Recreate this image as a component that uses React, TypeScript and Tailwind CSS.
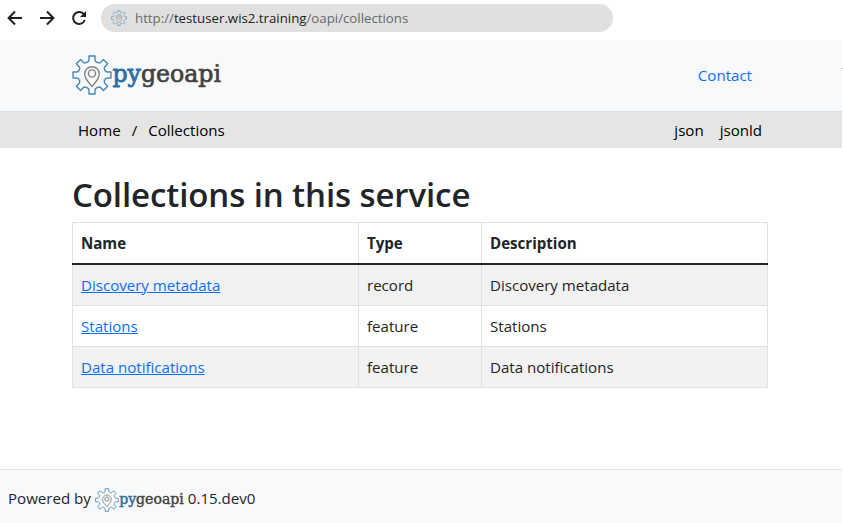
import { ReactNode } from 'react';

const FONT = "font-['Open_Sans','Noto_Sans',sans-serif]";

function GearPin({ className, size }: { className?: string; size?: number }) {
  return (
    <svg viewBox="0 0 40 40" width={size} height={size} className={className} fill="none" strokeLinejoin="round">
      <path
        stroke="#4a86b4"
        strokeWidth="1.4"
        d="M17 1h6v4q0 1.500 1.500 2l1.500.7q1.600.7 2.800-.5l2.600-2.600 4.200 4.200-2.600 2.600q-1.200 1.200-.6 2.700l.7 1.500q.6 1.400 2.100 1.400H39v6h-3.800q-1.500 0-2.100 1.400l-.7 1.500q-.6 1.500.6 2.700l2.600 2.600-4.200 4.200-2.600-2.600q-1.200-1.200-2.800-.5l-1.500.7q-1.500.5-1.500 2v4h-6v-4q0-1.500-1.500-2l-1.500-.7q-1.600-.7-2.800.5l-2.600 2.600-4.200-4.200 2.600-2.600q1.200-1.200.6-2.700l-.7-1.500Q6.300 23 4.800 23H1v-6h3.800q1.500 0 2.100-1.400l.7-1.500q.6-1.500-.6-2.700L4.400 8.800l4.200-4.200 2.600 2.600q1.200 1.200 2.800.5l1.500-.7q1.500-.5 1.500-2z"
      />
      <path stroke="#828282" strokeWidth="1.4" d="M20 31.500c-3-4-7.300-7.500-7.300-12.500a7.300 7.300 0 0 1 14.600 0c0 5-4.300 8.500-7.300 12.500z" />
      <circle cx="20" cy="18.500" r="3.600" stroke="#828282" strokeWidth="1.4" />
    </svg>
  );
}

function Logo({ className }: { className?: string }) {
  return (
    <svg viewBox="0 0 151 40" className={className} overflow="visible" role="img" aria-label="pygeoapi">
      <GearPin size={40} />
      <text x="40.500" y="26.500" fontSize="25" fontFamily="DejaVu Serif, serif" textLength="108.500" lengthAdjust="spacingAndGlyphs" fill="#414141" stroke="#414141" strokeWidth="0.7">
        <tspan fill="#3070a3" stroke="#3070a3" strokeWidth="0.9">py</tspan>geoapi
      </text>
    </svg>
  );
}

function Cell({ children }: { children: ReactNode }) {
  return <td className="border border-[#dee2e6] px-2 pt-2 pb-2">{children}</td>;
}

const rows = [
  ['Discovery metadata', 'record'],
  ['Stations', 'feature'],
  ['Data notifications', 'feature'],
];

export default function App() {
  return (
    <div className={`${FONT} flex h-[523px] w-[842px] flex-col bg-white text-[15.1px] leading-6 tracking-[-0.01px] text-[#212529]`}>
      <div className="flex h-10 shrink-0 items-start pt-1 pl-[7px]">
        <svg width="82" height="28" viewBox="0 0 82 28" fill="none" stroke="#202124" strokeWidth="2">
          <path d="M15 14H2M8 7.500L1.600 14 8 20.500" />
          <path d="M33 14h13M40 7.500l6.400 6.500-6.400 6.500" />
          <path d="M77 10.500A6 6 0 1 0 77.800 16" />
          <path d="M79 7v6h-6z" fill="#202124" stroke="none" />
        </svg>
        <div className="ml-3 flex h-7 w-[512px] items-center rounded-full bg-[#e0e0e0] pl-2.5 text-[13.25px] tracking-normal text-[#66686b]">
          <GearPin className="mr-2 h-4 w-4" />
          <span>http://<span className="text-[#202124]">testuser.wis2.training</span>/oapi/collections</span>
        </div>
      </div>
      <header className="relative flex h-[72px] shrink-0 items-center justify-between border-b border-[#dee2e6] bg-[#f8f9fa] pr-[90px] pb-0.5 pl-[72px]">
        <Logo className="h-10 w-[151px]" />
        <a className="text-[#0d6efd]">Contact</a>
        <span className="absolute top-7 -right-px h-px w-px bg-[#a5a7a9]" />
      </header>
      <nav className="flex h-[36px] shrink-0 items-center justify-between bg-[#e5e5e5] pr-[80px] pl-[78px] text-black">
        <div className="flex"><span>Home</span><span className="mx-[11px]">/</span><span>Collections</span></div>
        <div className="flex gap-4"><span>json</span><span>jsonld</span></div>
      </nav>
      <main className="grow px-[72px] pt-[26px]">
        <h1 className="mb-[7px] h-[41px] text-[33px] leading-[41px] font-semibold tracking-[-0.1px] whitespace-nowrap">Collections in this service</h1>
        <table className="w-[696px] table-fixed border-collapse text-left">
          <colgroup><col className="w-[286px]" /><col className="w-[123px]" /><col /></colgroup>
          <thead>
            <tr className="h-[41px] border-b-2 border-[#212529]">
              {['Name', 'Type', 'Description'].map((h) => (
                <th key={h} className="border border-b-2 border-[#dee2e6] border-b-[#212529] px-2 py-0 font-bold">{h}</th>
              ))}
            </tr>
          </thead>
          <tbody>
            {rows.map(([name, type]) => (
              <tr key={name} className="h-[41px] odd:bg-[#f2f2f2]">
                <Cell><a className="text-[#0d6efd] underline">{name}</a></Cell>
                <Cell>{type}</Cell>
                <Cell>{name}</Cell>
              </tr>
            ))}
          </tbody>
        </table>
      </main>
      <footer className="flex h-[54px] shrink-0 items-center border-t border-[#dee2e6] bg-[#f8f9fa] pt-[3px] pl-2">
        <span>Powered by</span>
        <Logo className="mt-[3px] mr-[3px] ml-1 h-6 w-[90px]" />
        <span>0.15.dev0</span>
      </footer>
    </div>
  );
}
